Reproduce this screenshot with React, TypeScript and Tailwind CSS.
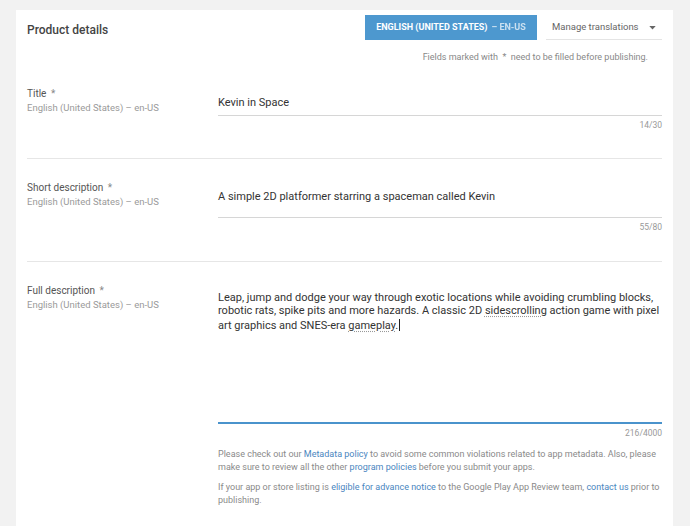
import React from 'react';

const font = { fontFamily: 'Roboto, "Liberation Sans", Arial, sans-serif' };

function FieldLabel({ title, locale }: { title: string; locale: string }) {
  return (
    <div className="w-[191px] shrink-0">
      <div className="text-[10px] leading-[14px] text-[#555]">
        {title} <span className="ml-[2px] text-[#888]">*</span>
      </div>
      <div className="text-[9.5px] leading-[14px] text-[#9a9a9a]">{locale}</div>
    </div>
  );
}

export default function App() {
  return (
    <div className="h-[526px] overflow-hidden bg-[#f2f2f2] pl-4 pr-[17px] pt-[10px]" style={font}>
      <div className="h-full bg-white px-[11px]">
        {/* Header */}
        <div className="flex items-center justify-between pt-[5px]">
          <h1 className="mt-[5px] text-[12px] font-medium text-[#444]">Product details</h1>
          <div className="flex items-stretch gap-[9px]">
            <button className="flex h-[25px] w-[172px] items-center justify-center bg-[#4d98cf] text-[9px] font-bold text-white">
              ENGLISH (UNITED STATES)
              <span className="ml-1 opacity-70 blur-[0.6px]">– EN-US</span>
            </button>
            <div className="flex w-[116px] items-center justify-between border-b border-[#e4e4e4] pl-[6px] pr-[6px] text-[9.5px] text-[#666]">
              <span>Manage translations</span>
              <svg width="7" height="4" viewBox="0 0 8 5" className="mt-[1px]">
                <path d="M0 0 L8 0 L4 4.5 Z" fill="#666" />
              </svg>
            </div>
          </div>
        </div>
        <div className="mt-[11px] pr-[14px] text-right text-[9px] leading-[12px] text-[#888]">
          Fields marked with&nbsp; * &nbsp;need to be filled before publishing.
        </div>

        {/* Title */}
        <div className="flex border-b border-[#e6e6e6] pb-[27px] pt-[24px]">
          <FieldLabel title="Title" locale="English (United States) – en-US" />
          <div className="flex-1">
            <div className="mt-[8px] border-b border-[#d6d6d6] pb-[4px] text-[11px] leading-[16px] text-[#333]">
              Kevin in Space
            </div>
            <div className="mt-[3px] text-right text-[8.5px] leading-[12px] text-[#999]">14/30</div>
          </div>
        </div>

        {/* Short description */}
        <div className="flex border-b border-[#e6e6e6] pb-[28px] pt-[22px]">
          <FieldLabel title="Short description" locale="English (United States) – en-US" />
          <div className="flex-1">
            <div className="mt-[8px] border-b border-[#d6d6d6] pb-[12px] text-[11px] leading-[16px] text-[#333]">
              A simple 2D platformer starring a spaceman called Kevin
            </div>
            <div className="mt-[3px] text-right text-[8.5px] leading-[12px] text-[#999]">55/80</div>
          </div>
        </div>

        {/* Full description */}
        <div className="flex pt-[22px]">
          <FieldLabel title="Full description" locale="English (United States) – en-US" />
          <div className="flex-1">
            <div className="mt-[7px] h-[133px] border-b-2 border-[#4a93cc] text-[11px] leading-[13px] text-[#333]">
              Leap, jump and dodge your way through exotic locations while avoiding crumbling blocks, robotic rats, spike pits and more hazards. A classic 2D{' '}
              <span className="underline decoration-[#999] decoration-dotted underline-offset-2">sidescrolling</span> action game with pixel art graphics and SNES-era{' '}
              <span className="underline decoration-[#999] decoration-dotted underline-offset-2">gameplay</span>.
              <span className="ml-[1px] inline-block h-[12px] w-px translate-y-[2px] bg-[#222]" />
            </div>
            <div className="mt-[3px] text-right text-[8.5px] leading-[12px] text-[#999]">216/4000</div>
            <p className="mt-[9px] text-[9px] leading-[13px] text-[#8a8a8a]">
              Please check out our <span className="text-[#4a86c0]">Metadata policy</span> to avoid some common violations related to app metadata. Also, please make sure to review all the other <span className="text-[#4a86c0]">program policies</span> before you submit your apps.
            </p>
            <p className="mt-[7px] text-[9px] leading-[13px] text-[#8a8a8a]">
              If your app or store listing is <span className="text-[#4a86c0]">eligible for advance notice</span> to the Google Play App Review team, <span className="text-[#4a86c0]">contact us</span> prior to publishing.
            </p>
          </div>
        </div>
      </div>
    </div>
  );
}
